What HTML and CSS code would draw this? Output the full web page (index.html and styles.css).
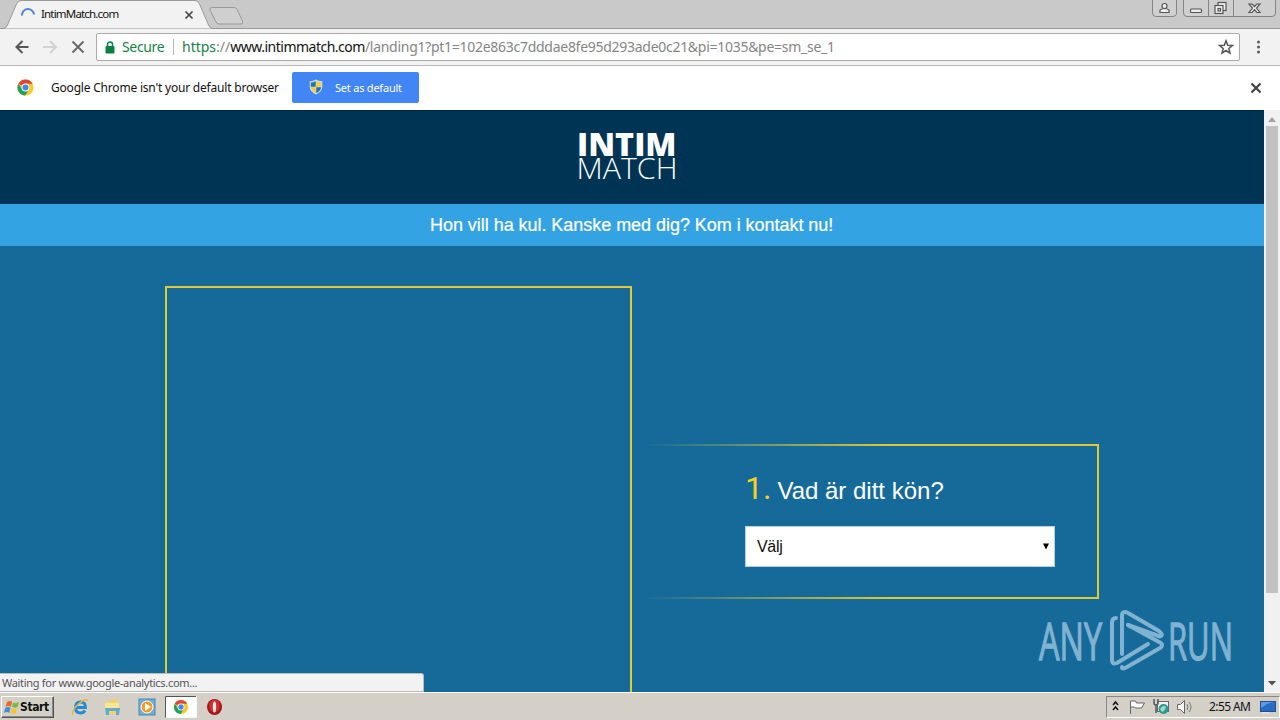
FILE: index.html
```html
<!DOCTYPE html>
<html lang="sv">
<head>
<meta charset="utf-8">
<title>IntimMatch.com</title>
<link rel="stylesheet" href="styles.css">
</head>
<body>
<div class="desktop">
  <header class="tabstrip">
    <svg class="tabs" width="260" height="29" viewBox="0 0 260 29">
      <path d="M0 28.500H3Q6 28.500 7.500 25L16.500 4Q18 .500 21 .500H195Q198 .500 199.500 4L208.500 25Q210 28.500 213 28.500H260" fill="#f2f2f2" stroke="#999"/>
      <path d="M213 7.500H234Q236 7.500 237 9.500L242.500 21Q243.500 24 241 24H219Q217 24 216 22L210 10Q209 7.500 213 7.500Z" fill="#cfcfcf" stroke="#999"/>
      <path d="M22 15.500A6 6 0 0 1 34 14.500" fill="none" stroke="#5484e0" stroke-width="2"/>
      <path d="M185.500 11.500l7 7m0-7l-7 7" stroke="#444" stroke-width="1.700"/>
    </svg>
    <span class="tab-title">IntimMatch.com</span>
    <svg class="controls" width="128" height="18" viewBox="0 0 128 18">
      <g fill="#cfcfcf" stroke="#858585"><path d="M.500-2V13Q.500 16.500 4 16.500H20Q24.500 16.500 24.500 13V-2"/><path d="M31.500-2V13Q31.500 16.500 35 16.500H120Q123.500 16.500 123.500 13V-2"/><path d="M56.500 0V16M81.500 0V16"/></g>
      <g fill="#eee" stroke="#555" stroke-width="1.200"><circle cx="12.500" cy="6" r="2.500"/><path d="M8 12.500V10Q12.500 7 17 10V12.500Z"/><rect x="38.500" y="9" width="11" height="3.500" rx="1"/><rect x="66" y="2.500" width="8" height="8"/><rect x="63" y="5.500" width="8" height="8"/><rect x="66" y="8.500" width="2.500" height="2.500"/><path d="M97 4h3.200l2.300 2.500L104.800 4h3.200l-3.500 4 3.500 4.500h-3.200l-2.300-2.800-2.300 2.800H97l3.500-4.500Z"/></g>
    </svg>
  </header>

  <div class="toolbar">
    <svg class="nav" width="96" height="36" viewBox="0 0 96 36" fill="none" stroke-width="2">
      <path d="M28.500 18H17m5.500-6l-6 6 6 6" stroke="#555"/><path d="M43 18h12.500m-5.500-6l6 6-6 6" stroke="#d2d2d2"/><path d="M72.500 12.500l11 11m0-11l-11 11" stroke="#666" stroke-width="1.800"/>
    </svg>
    <div class="omnibox">
      <svg class="lock" width="10" height="13" viewBox="0 0 10 13"><rect x=".5" y="5" width="9" height="7.500" rx="1" fill="#0b8043"/><path d="M2.500 5V3.500a2.500 2.500 0 0 1 5 0V5" fill="none" stroke="#0b8043" stroke-width="1.500"/></svg>
      <span class="secure">Secure</span><i class="sep"></i>
      <span class="url"><span class="scheme">https</span><span class="path">://</span><span class="host">www.intimmatch.com</span><span class="path rest">/landing1?pt1=102e863c7dddae8fe95d293ade0c21&amp;pi=1035&amp;pe=sm_se_1</span></span>
      <svg class="star" width="16" height="16" viewBox="0 0 16 16"><path d="M8 1.800l1.700 4.400 4.700.3-3.600 3 1.200 4.600L8 11.500l-4 2.600 1.200-4.600-3.600-3 4.700-.3Z" fill="none" stroke="#555" stroke-width="1.500"/></svg>
    </div>
    <svg class="kebab" width="5" height="16" viewBox="0 0 5 16" fill="#5a5a5a"><circle cx="2.500" cy="3" r="1.500"/><circle cx="2.500" cy="8" r="1.500"/><circle cx="2.500" cy="13" r="1.500"/></svg>
  </div>

  <div class="infobar">
    <svg width="17" height="17" viewBox="0 0 18 18"><use href="#chrome"/></svg>
    <span class="info-text">Google Chrome isn't your default browser</span>
    <button class="default-btn">
      <svg width="14" height="16" viewBox="0 0 14 16"><path d="M7 .5Q10 2.500 13.300 2.300V8Q13 13 7 15.500Q1 13 .7 8V2.300Q4 2.500 7 .5Z" fill="#d5dcd8"/><path d="M6.700 2V7.700H1.800V3.500Q4.500 3.500 6.700 2ZM7.300 8.300H12.200Q11.500 12 7.300 14.200Z" fill="#2472ad"/><path d="M7.300 2Q9.500 3.500 12.200 3.500V7.700H7.300ZM1.800 8.300H6.700V14.200Q2.500 12 1.800 8.300Z" fill="#f4ce3b"/></svg>
      <span>Set as default</span>
    </button>
    <svg class="info-close" width="12" height="12" viewBox="0 0 12 12"><path d="M1.500 1.500l9 9m0-9l-9 9" stroke="#444" stroke-width="2.200"/></svg>
  </div>

  <div class="viewport">
    <main class="page">
      <div class="brand">
        <svg width="104" height="70" viewBox="0 -10 104 70" fill="#fff">
          <text class="logo-bold" x="2" y="26" textLength="99.500" lengthAdjust="spacingAndGlyphs">INTIM</text>
          <text class="logo-light" x="1.500" y="49" textLength="101" lengthAdjust="spacingAndGlyphs">MATCH</text>
        </svg>
      </div>
      <div class="slogan"><span>Hon vill ha kul. Kanske med dig? Kom i kontakt nu!</span></div>
      <div class="content">
        <div class="photo"></div>
        <section class="step">
          <h1><b>1.</b><span>Vad är ditt kön?</span></h1>
          <div class="select"><span>Välj</span><svg width="6" height="7" viewBox="0 0 6 7"><path d="M0 .500h6L3 6.500Z"/></svg></div>
        </section>
      </div>
      <svg class="watermark" width="230" height="90" viewBox="0 0 230 90">
        <g class="mark-text"><text x="9" y="57.500" textLength="63" lengthAdjust="spacingAndGlyphs">ANY</text><text x="138" y="57.500" textLength="65" lengthAdjust="spacingAndGlyphs">RUN</text></g>
        <g fill="none" stroke="#81b2d1" stroke-width="4" stroke-linejoin="round" stroke-linecap="round">
          <path d="M86 16Q82 16 82 21V58Q82 63 87 61L118 42"/>
          <path d="M92 52V14Q92 8 98 11L129 29Q134 33 130 34.500L98 23"/>
          <path d="M98 23L130 40.500Q134 43 130 46L97 65Q92 68 92 65"/>
        </g>
      </svg>
      <div class="status">Waiting for www.google-analytics.com...</div>
    </main>
    <div class="scrollbar"><svg width="8" height="5"><path d="M0 5L4 0 8 5Z" fill="#a3a3a3"/></svg><i class="thumb"></i><svg width="8" height="5"><path d="M0 0H8L4 4.500Z" fill="#505050"/></svg></div>
  </div>

  <footer class="taskbar">
    <div class="start"><svg width="16" height="16" viewBox="0 0 16 16"><path d="M3 3Q6 1 8 3L6.800 8Q4 6 1.500 8Z" fill="#e96a2c"/><path d="M9 3.500Q12 5 15 3L13.500 8Q11 9.500 8 8Z" fill="#7bb741"/><path d="M1.200 9Q4 7 6.500 9L5.200 14Q3 12 0 14Z" fill="#3f8ede"/><path d="M7.500 9.500Q10 11 13.200 9L12 14Q9 15.500 6.200 14Z" fill="#f6c42c"/></svg><span>Start</span></div>
    <svg class="launch" width="168" height="24" viewBox="0 0 168 24">
      <defs>
        <g id="chrome"><circle cx="9" cy="9" r="8.500" fill="#f9ca24"/><path d="M9 9L1.500 5A8.500 8.500 0 0 1 16.500 5H9Z" fill="#df4437"/><path d="M1.500 5A8.500 8.500 0 0 0 8.700 17.500L12.500 11 9 9 5 10Z" fill="#20a05a"/><circle cx="9" cy="9" r="4.200" fill="#fff"/><circle cx="9" cy="9" r="3.200" fill="#4687ed"/></g>
      </defs>
      <g fill="none"><path d="M14 12.500H23.500Q23.500 7 18.500 7Q13.500 7 13.500 12.500Q13.500 18 18.500 18Q21.500 18 23 15.500" stroke="#258bd5" stroke-width="2.900"/><path d="M11 20Q8.500 17 15.500 10Q23 3 26 5.500" stroke="#e8b83e" stroke-width="1.500"/></g>
      <path d="M44 6h6l1-2h5v15H44Z" fill="#f2d26e"/><path d="M43 8h14v8H43Z" fill="#f9e49a"/><path d="M43 13h15l-1 7h-3v-4h-7v4h-3Z" fill="#62acc8"/>
      <rect x="77" y="4" width="16" height="16" fill="#72add8" stroke="#438abb"/><circle cx="85" cy="12" r="6" fill="#f49b23" stroke="#fff"/><path d="M83 8l6 4-6 4Z" fill="#fff"/>
      <path d="M103.500 22.500V1.500H134" fill="none" stroke="#555"/><rect x="104" y="2" width="30" height="20" fill="#fff"/><path d="M104 22.500H134.500V1" fill="none" stroke="#f8f8f8"/>
      <use href="#chrome" transform="translate(111.500 4.500) scale(.83)"/>
      <ellipse cx="152.500" cy="12" rx="7.500" ry="8" fill="#a5151a"/><ellipse cx="152.500" cy="11" rx="5.500" ry="6.500" fill="#c93030"/><ellipse cx="152.500" cy="12" rx="1.700" ry="5.500" fill="#f8e5e2"/>
    </svg>
    <div class="tray">
      <svg width="100" height="22" viewBox="0 0 100 22">
        <path d="M6 9l2.500-3L11 9M6 14l2.500-3 2.500 3" fill="none" stroke="#111" stroke-width="1.500"/>
        <path d="M23.500 18V5M23.500 5h5l1 2h8l-3 5h-6l-1-1h-4" fill="#fff" stroke="#666"/>
        <rect x="50.500" y="5.500" width="11" height="10" fill="#f2f2f2" stroke="#666"/><path d="M47 3v4q0 2 2 2t2-2V3M49 9v8" fill="none" stroke="#555" stroke-width="1.500"/><circle cx="56.500" cy="13" r="5" fill="#269c91"/><path d="M53 13q3-5 6-2q-1 4-4 5Z" fill="#a8d7c3"/>
        <path d="M70.500 8.500h3l4-4v13l-4-4h-3Z" fill="#fff" stroke="#666"/><path d="M80 8q2 3 0 6M82 6q4 5 0 10" fill="none" stroke="#777"/>
      </svg>
      <span class="clock">2:55 AM</span>
      <svg class="monitor" width="16" height="14" viewBox="0 0 16 14"><rect x=".5" y="1.500" width="15" height="10" fill="#276bc6" stroke="#274f89"/><path d="M1 2h13q-7 1-13 6Z" fill="#5e9be2"/><path d="M2 12h7v1.500H2Z" fill="#e3e8ed"/></svg>
    </div>
  </footer>
</div>
</body>
</html>
```
FILE: styles.css
```css
*{box-sizing:border-box}
body{margin:0;font-family:"Noto Sans","DejaVu Sans",sans-serif;color:#111}
svg{display:block;flex-shrink:0}
.desktop{width:1280px;height:720px;display:flex;flex-direction:column;overflow:hidden}
.tabstrip{height:29px;flex-shrink:0;background:#c9c9c9;border-bottom:1px solid #999;display:flex;justify-content:space-between;position:relative}
.tab-title{position:absolute;left:41px;top:5px;font:11.500px/18px "Noto Sans",sans-serif;letter-spacing:-.82px}
.toolbar{height:37px;flex-shrink:0;background:#f2f2f2;border-bottom:1px solid #b6b6b6;display:flex;align-items:center}
.omnibox{width:1144px;height:28px;border:1px solid #aaa;border-radius:2px;background:#fff;display:flex;align-items:center;font-size:14px;line-height:26px}
.lock{margin-left:8px}
.secure{width:43px;margin-left:7px;color:#198048;letter-spacing:-.35px;white-space:nowrap}
.sep{width:1px;height:16px;margin:0 8px 0 8px;background:#bbb}
.url{white-space:nowrap;flex:1}
.scheme{color:#198048}
.host{letter-spacing:-.5px}
.path{color:#858585}
.rest{letter-spacing:-.28px}
.star{margin-right:5px}
.kebab{margin-left:16px}
.infobar{height:44px;flex-shrink:0;background:#fff;display:flex;align-items:center;padding:0 0 1px 17px}
.info-text{width:228px;margin-left:17px;font-size:12px;letter-spacing:-.2px;white-space:nowrap}
.default-btn{width:127px;height:31px;margin-left:13px;padding:0 0 1px 17px;border:0;border-radius:2px;background:#4285f4;color:#fff;display:flex;align-items:center;gap:12px;font:11px "Noto Sans",sans-serif;letter-spacing:-.22px;white-space:nowrap}
.info-close{margin-left:auto;margin-right:18px}
.viewport{height:582px;flex-shrink:0;display:flex}
.page{width:1264px;background:#166a9a;position:relative;overflow:hidden}
.brand{height:94px;background:#003454;border-top:1px solid #00263f;padding:9px 0 0 575px}
.logo-bold{font:800 32px "Open Sans",sans-serif}
.logo-light{font:300 30px "Open Sans",sans-serif}
.slogan{height:42px;background:#34a3e3;color:#fff;padding-left:430px;font:18px/42px "Liberation Sans",Arial,sans-serif;letter-spacing:-.04px;-webkit-text-stroke:.2px #fff}
.content{display:flex;padding:40px 0 0 165px}
.photo{width:467px;height:467px;border:2px solid #e1ca35}
.step{width:467px;height:155px;margin-top:157.500px;padding:24.500px 0 0 113px;border:2px solid;border-left:0;border-image:linear-gradient(90deg,#166a9a 3%,#e1c832 55%) 2;font-family:"Liberation Sans",Arial,sans-serif}
.step h1{margin:0;height:56px;display:flex;align-items:baseline;gap:6px;font-size:24px;font-weight:400;line-height:36px;color:#fff}
.step b{font:32px/36px Roboto,sans-serif;color:#f4d11f}
.select{width:310px;height:41px;border:1px solid #b7d2e2;background:#fff;display:flex;align-items:center;justify-content:space-between;padding:0 5px 0 11px;font-size:16px;letter-spacing:-.3px}
.watermark{position:absolute;left:1030px;top:492px}
.mark-text{font:400 52px "Open Sans",sans-serif;fill:#81b2d1;stroke:#81b2d1;stroke-width:1.300px}
.status{position:absolute;left:0;bottom:0;width:424px;height:19px;border:1px solid #bbb;border-left:0;border-radius:0 3px 0 0;background:#f2f2f2;color:#555;font-size:11px;line-height:18px;letter-spacing:-.3px;padding-left:2px}
.scrollbar{width:16px;background:#f1f1f1;padding:7px 0 6px;display:flex;flex-direction:column;align-items:center}
.thumb{width:12px;height:467px;margin:4px 0 auto;background:#c1c1c1}
.taskbar{height:28px;flex-shrink:0;background:#d4d0c8;border-top:1px solid #fff;padding-left:1px;display:flex;align-items:center}
.start{width:53px;height:22px;border:1px solid;border-color:#fff #555 #555 #fff;box-shadow:inset -1px -1px #888;display:flex;align-items:center;padding-left:2px;font:bold 12px "DejaVu Sans",sans-serif;font-stretch:condensed;letter-spacing:-.4px}
.launch{margin-left:8px}
.tray{width:174px;height:22px;margin-left:auto;border:1px solid;border-color:#888 #fff #fff #888;display:flex;align-items:center}
.clock{width:42px;margin-left:2px;font-size:12px;letter-spacing:-.6px;white-space:nowrap}
.monitor{margin-left:9px}
```
